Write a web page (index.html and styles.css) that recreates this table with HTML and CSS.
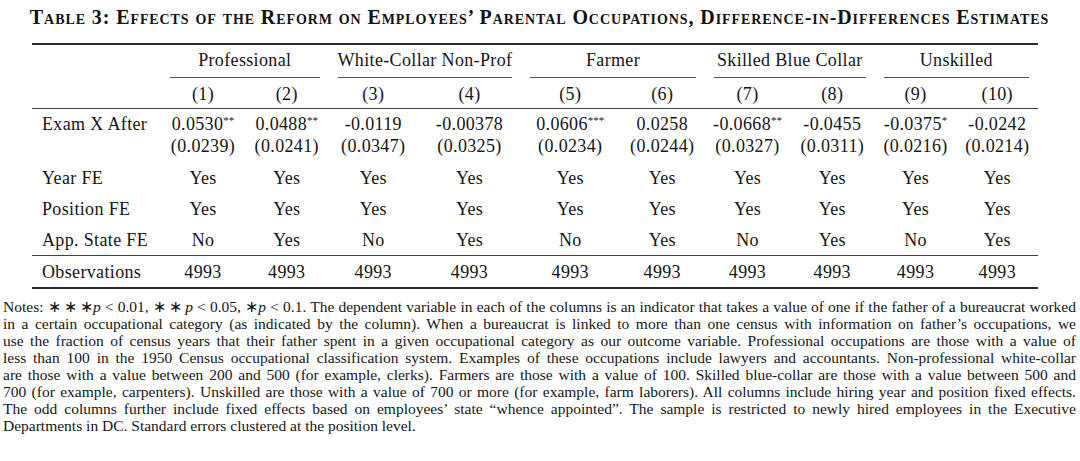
FILE: index.html
```html
<!DOCTYPE html>
<html lang="en">
<head>
<meta charset="utf-8">
<title>Table 3</title>
<link rel="stylesheet" href="styles.css">
</head>
<body>
<div class="page">
  <h1 class="title">Table 3: Effects of the Reform on Employees’ Parental Occupations, Difference-in-Differences Estimates</h1>
  <table class="reg">
    <colgroup>
      <col class="c-label">
      <col class="c1"><col class="c2"><col class="c3"><col class="c4"><col class="c5">
      <col class="c6"><col class="c7"><col class="c8"><col class="c9"><col class="c10">
    </colgroup>
    <thead>
      <tr class="groups">
        <th></th>
        <th colspan="2"><div class="grp">Professional</div></th>
        <th colspan="2"><div class="grp">White-Collar Non-Prof</div></th>
        <th colspan="2"><div class="grp">Farmer</div></th>
        <th colspan="2"><div class="grp">Skilled Blue Collar</div></th>
        <th colspan="2"><div class="grp">Unskilled</div></th>
      </tr>
      <tr class="nums">
        <th></th>
        <th>(1)</th><th>(2)</th><th>(3)</th><th>(4)</th><th>(5)</th>
        <th>(6)</th><th>(7)</th><th>(8)</th><th>(9)</th><th>(10)</th>
      </tr>
    </thead>
    <tbody>
      <tr class="coef">
        <td class="lbl">Exam X After</td>
        <td>0.0530<sup>**</sup><br>(0.0239)</td>
        <td>0.0488<sup>**</sup><br>(0.0241)</td>
        <td>-0.0119<br>(0.0347)</td>
        <td>-0.00378<br>(0.0325)</td>
        <td>0.0606<sup>***</sup><br>(0.0234)</td>
        <td>0.0258<br>(0.0244)</td>
        <td>-0.0668<sup>**</sup><br>(0.0327)</td>
        <td>-0.0455<br>(0.0311)</td>
        <td>-0.0375<sup>*</sup><br>(0.0216)</td>
        <td>-0.0242<br>(0.0214)</td>
      </tr>
      <tr class="fe">
        <td class="lbl">Year FE</td>
        <td>Yes</td><td>Yes</td><td>Yes</td><td>Yes</td><td>Yes</td>
        <td>Yes</td><td>Yes</td><td>Yes</td><td>Yes</td><td>Yes</td>
      </tr>
      <tr class="fe">
        <td class="lbl">Position FE</td>
        <td>Yes</td><td>Yes</td><td>Yes</td><td>Yes</td><td>Yes</td>
        <td>Yes</td><td>Yes</td><td>Yes</td><td>Yes</td><td>Yes</td>
      </tr>
      <tr class="fe">
        <td class="lbl">App. State FE</td>
        <td>No</td><td>Yes</td><td>No</td><td>Yes</td><td>No</td>
        <td>Yes</td><td>No</td><td>Yes</td><td>No</td><td>Yes</td>
      </tr>
    </tbody>
    <tfoot>
      <tr class="obs">
        <td class="lbl">Observations</td>
        <td>4993</td><td>4993</td><td>4993</td><td>4993</td><td>4993</td>
        <td>4993</td><td>4993</td><td>4993</td><td>4993</td><td>4993</td>
      </tr>
    </tfoot>
  </table>
  <p class="notes">
    <span class="ln">Notes: <span class="m">∗&#8201;∗&#8201;∗<i>p</i> &lt; 0.01, ∗&#8201;∗&#8201;<i>p</i> &lt; 0.05, ∗<i>p</i> &lt; 0.1.</span> The dependent variable in each of the columns is an indicator that takes a value of one if the father of a bureaucrat worked</span>
    <span class="ln">in a certain occupational category (as indicated by the column). When a bureaucrat is linked to more than one census with information on father’s occupations, we</span>
    <span class="ln">use the fraction of census years that their father spent in a given occupational category as our outcome variable. Professional occupations are those with a value of</span>
    <span class="ln">less than 100 in the 1950 Census occupational classification system. Examples of these occupations include lawyers and accountants. Non-professional white-collar</span>
    <span class="ln">are those with a value between 200 and 500 (for example, clerks). Farmers are those with a value of 100. Skilled blue-collar are those with a value between 500 and</span>
    <span class="ln">700 (for example, carpenters). Unskilled are those with a value of 700 or more (for example, farm laborers). All columns include hiring year and position fixed effects.</span>
    <span class="ln">The odd columns further include fixed effects based on employees’ state “whence appointed”. The sample is restricted to newly hired employees in the Executive</span>
    <span class="ln last">Departments in DC. Standard errors clustered at the position level.</span>
  </p>
</div>
</body>
</html>
```

FILE: styles.css
```css
html, body {
  margin: 0;
  padding: 0;
  background: #ffffff;
}

body {
  font-family: "Liberation Serif", "Times New Roman", serif;
  color: #151515;
}

.page {
  width: 1080px;
  height: 461px;
  padding: 0 4px 0 3px;
  box-sizing: border-box;
  overflow: hidden;
}

.title {
  margin: 7px 0 0 0;
  font-size: 20px;
  line-height: 20px;
  font-weight: bold;
  font-variant: small-caps;
  letter-spacing: 0.91px;
  text-align: center;
  white-space: nowrap;
  color: #111;
}

.reg {
  margin: 16px 0 0 29px;
  border-collapse: collapse;
  table-layout: fixed;
  width: 1006px;
  font-size: 18px;
  line-height: 22px;
  letter-spacing: 0.35px;
  border-top: 2px solid #2a2a2a;
  border-bottom: 2px solid #2a2a2a;
}

.c-label { width: 129px; }
.c1 { width: 84px; }
.c2 { width: 83.5px; }
.c3 { width: 89.5px; }
.c4 { width: 103px; }
.c5 { width: 98.5px; }
.c6 { width: 85.5px; }
.c7 { width: 85px; }
.c8 { width: 84.5px; }
.c9 { width: 82px; }
.c10 { width: 81.5px; }

.reg th,
.reg td {
  padding: 0;
  font-weight: normal;
  text-align: center;
  white-space: nowrap;
  vertical-align: top;
}

.reg .lbl {
  text-align: left;
  padding-left: 10px;
}

.groups th {
  padding-top: 4px;
}

.grp {
  margin: 0 9px;
  padding-bottom: 6px;
  border-bottom: 1px solid #555;
}

.nums th {
  padding-top: 5px;
  padding-bottom: 3px;
  border-bottom: 1px solid #444;
}

.coef td {
  padding-top: 4px;
  padding-bottom: 5px;
}

.fe td {
  padding-top: 4.5px;
  padding-bottom: 4.5px;
}

.fe:last-child td {
  border-bottom: 1px solid #444;
}

.obs td {
  padding-top: 4.5px;
  padding-bottom: 4.5px;
}

.reg sup {
  font-size: 11px;
  line-height: 0;
  vertical-align: 6px;
  letter-spacing: 0;
}

.notes {
  margin: 9px 0 0 0;
  font-size: 15.5px;
  line-height: 17px;
  color: #161616;
}

.ln {
  display: block;
  text-align: justify;
  text-align-last: justify;
}

.ln.last {
  text-align-last: left;
}

.m i {
  font-style: italic;
}
```
